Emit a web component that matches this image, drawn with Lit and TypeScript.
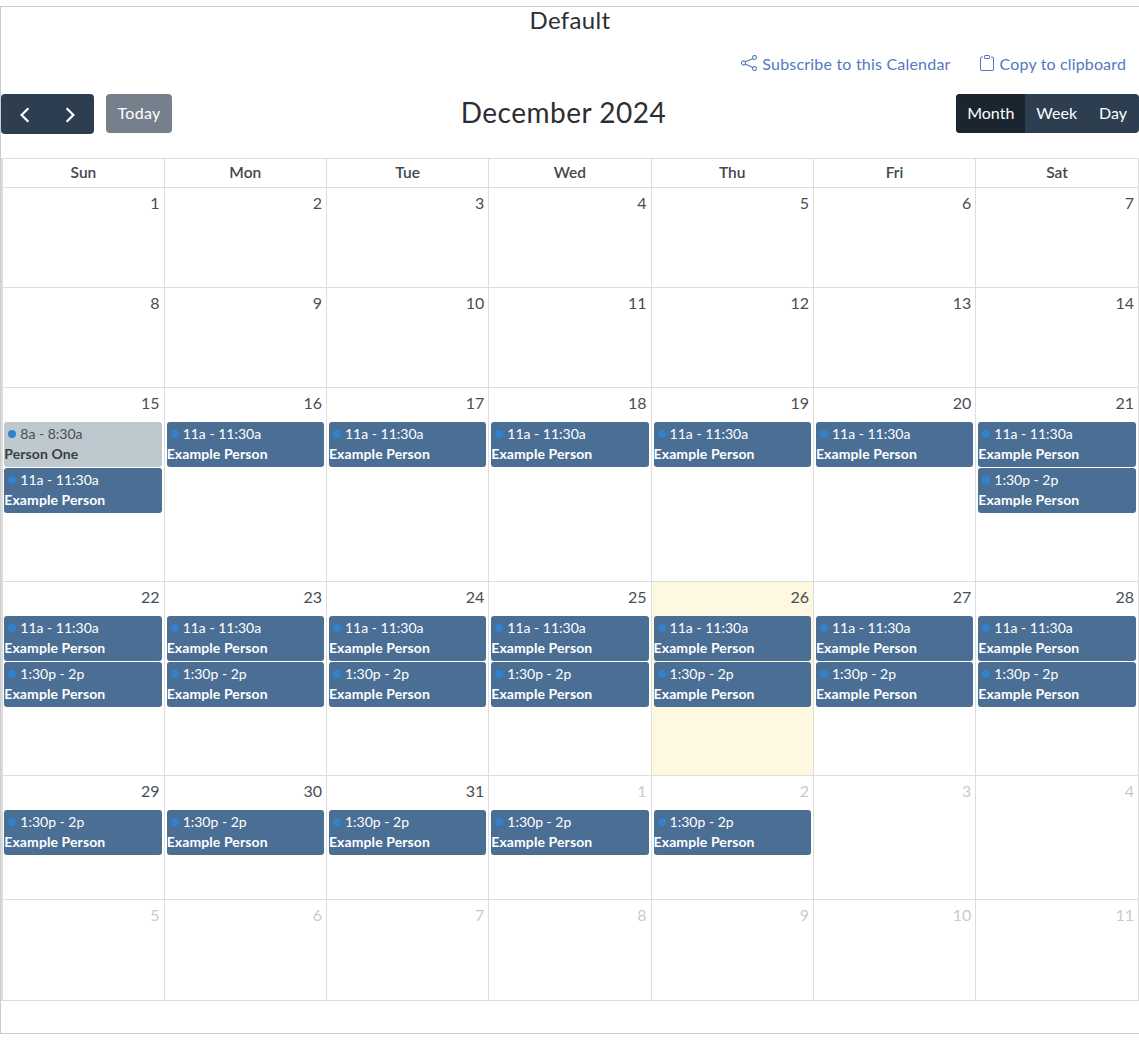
import { LitElement, html, css, svg } from "lit";
import { customElement } from "lit/decorators.js";

type Ev = { t: string; n: string; light?: boolean };
const am: Ev = { t: "11a - 11:30a", n: "Example Person" };
const pm: Ev = { t: "1:30p - 2p", n: "Example Person" };
const one: Ev = { t: "8a - 8:30a", n: "Person One", light: true };
type Day = { d: number; off?: boolean; today?: boolean; ev?: Ev[] };

const rows: Day[][] = [
  [1, 2, 3, 4, 5, 6, 7].map((d) => ({ d })),
  [8, 9, 10, 11, 12, 13, 14].map((d) => ({ d })),
  [
    { d: 15, ev: [one, am] },
    { d: 16, ev: [am] },
    { d: 17, ev: [am] },
    { d: 18, ev: [am] },
    { d: 19, ev: [am] },
    { d: 20, ev: [am] },
    { d: 21, ev: [am, pm] },
  ],
  [22, 23, 24, 25, 26, 27, 28].map((d) => ({ d, today: d === 26, ev: [am, pm] })),
  [
    { d: 29, ev: [pm] },
    { d: 30, ev: [pm] },
    { d: 31, ev: [pm] },
    { d: 1, off: true, ev: [pm] },
    { d: 2, off: true, ev: [pm] },
    { d: 3, off: true },
    { d: 4, off: true },
  ],
  [5, 6, 7, 8, 9, 10, 11].map((d) => ({ d, off: true })),
];
const heads = ["Sun", "Mon", "Tue", "Wed", "Thu", "Fri", "Sat"];

@customElement("app-root")
export class AppRoot extends LitElement {
  static styles = css`
    :host {
      display: block;
      padding-top: 6px;
      font-family: "Lato", "Noto Sans", sans-serif;
      color: #2b2f33;
      background: #fff;
      overflow: hidden;
    }
    .card {
      width: 1145px;
      height: 1028px;
      box-sizing: border-box;
      border: 1px solid #ccc;
    }
    .inner { width: 1138px; }
    h1 {
      margin: 0;
      font-size: 24px;
      font-weight: 400;
      line-height: 26px;
      text-align: center;
      letter-spacing: 0.35px;
    }
    .links {
      display: flex;
      justify-content: flex-end;
      gap: 28px;
      padding: 8px 13px 0 0;
      height: 24px;
      align-items: center;
      margin-top: 10px;
    }
    .link {
      display: flex;
      align-items: center;
      gap: 5px;
      color: #5578bf;
      font-size: 16px;
      letter-spacing: 0.2px;
    }
    .link.copy { letter-spacing: 0.15px; }
    .link svg { width: 16px; height: 16px; fill: currentColor; }
    .toolbar {
      display: grid;
      grid-template-columns: 1fr auto 1fr;
      align-items: start;
      margin-top: 19px;
      height: 64px;
    }
    .left { display: flex; gap: 12px; }
    .nav {
      width: 93px;
      height: 40px;
      border-radius: 4px;
      background: #2c3e50;
      display: flex;
      align-items: center;
      justify-content: space-around;
      padding: 2px 2px 0;
      box-sizing: border-box;
    }
    .nav svg { width: 18px; height: 18px; fill: none; stroke: #fff; stroke-width: 2; }
    .today {
      width: 66px;
      height: 39px;
      border-radius: 4px;
      background: #75808c;
      color: #fff;
      font-size: 16px;
      letter-spacing: 0.3px;
      line-height: 38px;
      text-align: center;
      box-sizing: border-box;
    }
    .title {
      font-size: 28px;
      line-height: 37px;
      letter-spacing: 0.5px;
      margin-left: -13px;
    }
    .views {
      justify-self: end;
      display: flex;
      height: 39px;
      border-radius: 4px;
      overflow: hidden;
      background: #2c3e50;
      color: #fff;
      font-size: 16px;
      line-height: 38px;
    }
    .views span { padding: 0 11px; }
    .views span:last-child { padding-right: 12px; }
    .views .on { background: #1a252f; padding: 0 11px; }
    .grid {
      display: grid;
      grid-template-columns: repeat(6, 162.33px) 163.7px;
      grid-template-rows: 29px 100px 100px 194px 194px 124px 101px;
      margin-left: 0.3px;
      border-top: 1px solid #ddd;
    }
    .h {
      border-left: 1px solid #ddd;
      border-bottom: 1px solid #ddd;
      text-align: center;
      font-weight: 600;
      font-size: 15.5px;
      line-height: 27px;
      color: #43474b;
      box-sizing: border-box;
    }
    .c {
      border-left: 1px solid #ddd;
      border-bottom: 1px solid #ddd;
      box-sizing: border-box;
      min-width: 0;
    }
    .c:nth-child(7n + 1), .h:nth-child(7n + 1) { border-left-width: 2px; }
    .c:nth-child(7n), .h:nth-child(7n) { border-right: 1px solid #ddd; }
    .c:nth-child(7n + 1) .ev { margin-left: 1px; }
    .today-cell { background: #fef8e0; }
    .num {
      height: 34px;
      line-height: 30px;
      text-align: right;
      padding-right: 4px;
      font-size: 16px;
      color: #4a4e52;
    }
    .off .num { color: #c8cbcd; }
    .ev {
      margin: 0 2px 1px;
      height: 45px;
      border-radius: 3px;
      background: #4b6e94;
      color: #fff;
      font-size: 14px;
      overflow: hidden;
    }
    .ev.light { background: #bdc8cf; color: #4a4e52; }
    .t { display: flex; align-items: center; height: 23px; padding-left: 4px; }
    .dot { width: 8px; height: 8px; border-radius: 50%; background: #3182ce; margin-right: 4px; }
    .n { margin-top: 1px; font-weight: 700; font-size: 14px; letter-spacing: 0.1px; line-height: 16px; white-space: nowrap; }
    .ev.light .n { color: #3a3e42; }
  `;

  private day(d: Day) {
    return html`<div class="c ${d.off ? "off" : ""} ${d.today ? "today-cell" : ""}">
      <div class="num">${d.d}</div>
      ${(d.ev ?? []).map(
        (e) => html`<div class="ev ${e.light ? "light" : ""}">
          <div class="t"><span class="dot"></span>${e.t}</div>
          <div class="n">${e.n}</div>
        </div>`
      )}
    </div>`;
  }

  render() {
    return html`<div class="card">
      <div class="inner">
        <h1>Default</h1>
        <div class="links">
          <span class="link">
            <svg viewBox="0 0 16 16">${svg`<path d="M13.5 1a1.5 1.5 0 1 0 0 3 1.5 1.5 0 0 0 0-3zM11 2.5a2.5 2.5 0 1 1 .603 1.628l-6.718 3.12a2.499 2.499 0 0 1 0 1.504l6.718 3.12a2.5 2.5 0 1 1-.488.876l-6.718-3.12a2.5 2.5 0 1 1 0-3.256l6.718-3.12A2.5 2.5 0 0 1 11 2.5zm-8.5 4a1.5 1.5 0 1 0 0 3 1.5 1.5 0 0 0 0-3zm11 5.5a1.5 1.5 0 1 0 0 3 1.5 1.5 0 0 0 0-3z"/>`}</svg>
            Subscribe to this Calendar
          </span>
          <span class="link copy">
            <svg viewBox="0 0 16 16">${svg`<path d="M4 1.5H3a2 2 0 0 0-2 2V14a2 2 0 0 0 2 2h10a2 2 0 0 0 2-2V3.5a2 2 0 0 0-2-2h-1v1h1a1 1 0 0 1 1 1V14a1 1 0 0 1-1 1H3a1 1 0 0 1-1-1V3.5a1 1 0 0 1 1-1h1v-1z"/><path d="M9.5 1a.5.5 0 0 1 .5.5v1a.5.5 0 0 1-.5.5h-3a.5.5 0 0 1-.5-.5v-1a.5.5 0 0 1 .5-.5h3zm-3-1A1.5 1.5 0 0 0 5 1.5v1A1.5 1.5 0 0 0 6.5 4h3A1.5 1.5 0 0 0 11 2.5v-1A1.5 1.5 0 0 0 9.5 0h-3z"/>`}</svg>
            Copy to clipboard
          </span>
        </div>
        <div class="toolbar">
          <div class="left">
            <div class="nav">
              <svg viewBox="0 0 16 16">${svg`<path d="M11 2L5 8l6 6"/>`}</svg>
              <svg viewBox="0 0 16 16">${svg`<path d="M5 2l6 6-6 6"/>`}</svg>
            </div>
            <div class="today">Today</div>
          </div>
          <div class="title">December 2024</div>
          <div class="views"><span class="on">Month</span><span>Week</span><span>Day</span></div>
        </div>
        <div class="grid">
          ${heads.map((h) => html`<div class="h">${h}</div>`)}
          ${rows.map((r) => r.map((d) => this.day(d)))}
        </div>
      </div>
    </div>`;
  }
}
